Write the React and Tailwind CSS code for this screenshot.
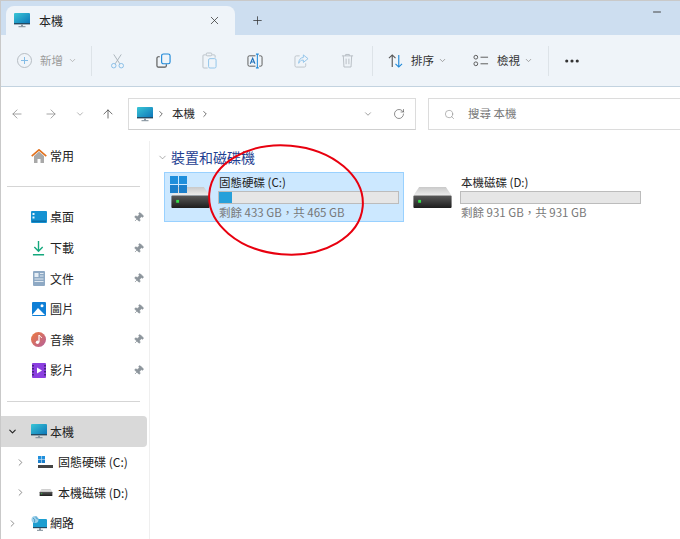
import React from 'react';
import { X, Plus, Minus, ChevronDown, ChevronRight, ArrowLeft, ArrowRight, ArrowUp, RotateCw, Search, MoreHorizontal, Pin } from 'lucide-react';

const font = { fontFamily: '"Noto Sans CJK TC", "Liberation Sans", sans-serif' };

const Monitor = ({ className }) => (
    <svg viewBox="0 0 16 15" className={className}>
        <defs>
            <linearGradient id="scr" x1="0" y1="0" x2="1" y2="1">
                <stop offset="0" stopColor="#39c6d6" />
                <stop offset="1" stopColor="#0c73b8" />
            </linearGradient>
        </defs>
        <rect x="0" y="0" width="16" height="11" rx="1" fill="url(#scr)" />
        <rect x="0" y="10" width="16" height="1.4" fill="#234a63" />
        <rect x="7" y="11.4" width="2" height="2" fill="#8a98a3" />
        <rect x="4.5" y="13.2" width="7" height="1" fill="#7c8a96" />
    </svg>
);

const WinLogo = ({ className }) => (
    <svg viewBox="0 0 17 17" className={className}>
        <rect x="0" y="0" width="8" height="8" fill="#1f8fdc" />
        <rect x="9" y="0" width="8" height="8" fill="#1f8fdc" />
        <rect x="0" y="9" width="8" height="8" fill="#1b7fcb" />
        <rect x="9" y="9" width="8" height="8" fill="#1b7fcb" />
    </svg>
);

const Drive = ({ className }) => (
    <svg viewBox="0 0 40 22" className={className}>
        <defs>
            <linearGradient id="drv" x1="0" y1="0" x2="0" y2="1">
                <stop offset="0" stopColor="#5a5a5a" />
                <stop offset="1" stopColor="#1d1d1d" />
            </linearGradient>
            <linearGradient id="top" x1="0" y1="0" x2="0" y2="1">
                <stop offset="0" stopColor="#c9c9c9" />
                <stop offset="1" stopColor="#eeeeee" />
            </linearGradient>
        </defs>
        <path d="M6 0 H34 L40 9 H0 Z" fill="url(#top)" />
        <rect x="0" y="9" width="40" height="13" rx="1" fill="url(#drv)" />
        <rect x="5" y="13.5" width="3" height="3" fill="#35e04a" />
    </svg>
);

const CutIcon = () => (
    <svg viewBox="0 0 16 16" className="w-[15px] h-[16px]" fill="none" strokeWidth="1">
        <path d="M4 1 L10.5 11 M12 1 L5.5 11" stroke="#a9b2ba" />
        <circle cx="4" cy="13" r="2.4" stroke="#84bce6" />
        <circle cx="12" cy="13" r="2.4" stroke="#84bce6" />
    </svg>
);

const CopyIcon = () => (
    <svg viewBox="0 0 16 16" className="w-[15px] h-[15px]" fill="none" strokeWidth="1.2">
        <path d="M4 4 H2.5 A1.5 1.5 0 0 0 1 5.5 V13.5 A1.5 1.5 0 0 0 2.5 15 H9.5 A1.5 1.5 0 0 0 11 13.5 V12" stroke="#555" />
        <rect x="6" y="1" width="9" height="10.5" rx="2" stroke="#1e88d8" />
    </svg>
);

const PasteIcon = () => (
    <svg viewBox="0 0 16 18" className="w-[15px] h-[17px]" fill="none" strokeWidth="1">
        <path d="M4 3 H2 A1 1 0 0 0 1 4 V16 A1 1 0 0 0 2 17 H6 M11 3 H13 A1 1 0 0 1 14 4 V6" stroke="#b9c0c6" />
        <rect x="4.5" y="1" width="6" height="3" rx="1" stroke="#b9c0c6" />
        <rect x="7" y="7" width="8" height="10" rx="1.5" stroke="#8fc3ea" />
    </svg>
);

const RenameIcon = () => (
    <svg viewBox="0 0 17 16" className="w-[16px] h-[16px]" fill="none">
        <path d="M9 2.5 H2.5 A1.5 1.5 0 0 0 1 4 V12 A1.5 1.5 0 0 0 2.5 13.5 H9 M13 2.5 H14.5 A1.5 1.5 0 0 1 16 4 V12 A1.5 1.5 0 0 1 14.5 13.5 H13" stroke="#555" strokeWidth="1" />
        <path d="M11 .7 V15.3 M9.5 .7 H12.5 M9.5 15.3 H12.5" stroke="#1e88d8" strokeWidth="1.1" />
        <path d="M3.5 11 L6 5 L8.5 11 M4.5 9 H7.5" stroke="#1e6fb8" strokeWidth="1.1" />
    </svg>
);

const ShareIcon = () => (
    <svg viewBox="0 0 16 15" className="w-[15px] h-[14px]" fill="none" strokeWidth="1">
        <path d="M6 2 H2.5 A1.5 1.5 0 0 0 1 3.5 V12.5 A1.5 1.5 0 0 0 2.5 14 H11 A1.5 1.5 0 0 0 12.5 12.5 V10" stroke="#bcc3c9" />
        <path d="M10 1 L15 5 L10 9 V6.5 C7.5 6.5 6 7.5 5 10 C5 6 7 4 10 3.7 Z" stroke="#8fc3ea" />
    </svg>
);

const TrashIcon = () => (
    <svg viewBox="0 0 14 16" className="w-[13px] h-[15px]" fill="none" stroke="#b5bcc2" strokeWidth="1">
        <path d="M1 3 H13 M5 3 V1.5 H9 V3 M2.5 3 L3.2 15 H10.8 L11.5 3 M5.5 6 V12 M8.5 6 V12" />
    </svg>
);

const SortIcon = () => (
    <svg viewBox="0 0 16 15" className="w-[15px] h-[14px]" fill="none" strokeWidth="1.2">
        <path d="M4.5 14 V1 M1 4.5 L4.5 1 L8 4.5" stroke="#555" />
        <path d="M11.5 1 V14 M8 10.5 L11.5 14 L15 10.5" stroke="#1e88d8" />
    </svg>
);

const ViewIcon = () => (
    <svg viewBox="0 0 17 13" className="w-[16px] h-[13px]" fill="none" stroke="#555" strokeWidth="1">
        <rect x="1" y="1" width="4" height="4" rx="2" />
        <rect x="1" y="8" width="4" height="4" rx="2" />
        <path d="M8 3 H16 M8 10 H16" />
    </svg>
);

const HomeIcon = () => (
    <svg viewBox="0 0 16 14" className="w-[16px] h-[14px]">
        <path d="M3 7 L8 2.5 L13 7 V14 H9.5 V10 H6.5 V14 H3 Z" fill="#a9a9a9" />
        <path d="M.7 7.2 L8 .8 L15.3 7.2" fill="none" stroke="#e2711d" strokeWidth="1.6" />
    </svg>
);

const DesktopIcon = () => (
    <svg viewBox="0 0 16 12" className="w-[16px] h-[12px]">
        <rect width="16" height="12" rx="1" fill="#1592d2" />
        <rect x="1" y="9.5" width="14" height="1.5" fill="#0b6ea8" />
        <rect x="1.5" y="2" width="2" height="2" fill="#e8f6fc" />
        <rect x="1.5" y="5.5" width="2" height="2" fill="#e8f6fc" />
    </svg>
);

const DownloadIcon = () => (
    <svg viewBox="0 0 14 16" className="w-[13px] h-[15px]" fill="none" stroke="#14a87d" strokeWidth="1.5">
        <path d="M7 0 V11 M2.5 6.5 L7 11 L11.5 6.5 M1 14.7 H13" />
    </svg>
);

const DocIcon = () => (
    <svg viewBox="0 0 12 15" className="w-[12px] h-[15px]">
        <rect width="12" height="15" rx="1" fill="#8ea9c4" />
        <rect x="1.5" y="2" width="4" height="4" fill="#e5edf4" />
        <path d="M7 2.5 H10.5 M7 5 H10.5 M1.5 8 H10.5 M1.5 10.5 H10.5" stroke="#dfe8f0" strokeWidth="1" />
    </svg>
);

const PicIcon = () => (
    <svg viewBox="0 0 14 14" className="w-[14px] h-[14px]">
        <rect width="14" height="14" rx="1" fill="#0f7fd6" />
        <circle cx="10" cy="3.8" r="1.5" fill="#fff" />
        <path d="M0 13 L6 6 L13 13 Z" fill="#fff" />
    </svg>
);

const MusicIcon = () => (
    <svg viewBox="0 0 15 15" className="w-[15px] h-[15px]">
        <defs>
            <linearGradient id="mus" x1="0" y1="0" x2="1" y2="1">
                <stop offset="0" stopColor="#ee7a3d" />
                <stop offset="1" stopColor="#b4609c" />
            </linearGradient>
        </defs>
        <circle cx="7.5" cy="7.5" r="7.5" fill="url(#mus)" />
        <path d="M8 3 V10" stroke="#fff" strokeWidth="1.2" />
        <path d="M8 3 C9 4.5 10.5 4.5 10.5 6" stroke="#fff" strokeWidth="1" fill="none" />
        <circle cx="6.5" cy="10.2" r="1.7" fill="#fff" />
    </svg>
);

const VideoIcon = () => (
    <svg viewBox="0 0 14 15" className="w-[14px] h-[15px]">
        <rect width="14" height="15" rx="1" fill="#8b3fe0" />
        <path d="M5 4.5 L10 7.5 L5 10.5 Z" fill="#fff" />
        <path d="M1 2 V13 M13 2 V13" stroke="#2d1a58" strokeWidth="1.4" strokeDasharray="1.5 1.5" />
    </svg>
);

const NetworkIcon = () => (
    <svg viewBox="0 0 16 15" className="w-[16px] h-[15px]">
        <rect x="2" y="3" width="14" height="9" rx="1" fill="#1d9ed0" />
        <rect x="2" y="11" width="14" height="1.2" fill="#234a63" />
        <rect x="8" y="12" width="2" height="2" fill="#8a98a3" />
        <rect x="6" y="13.8" width="6" height="1" fill="#7c8a96" />
        <circle cx="4" cy="3.6" r="3.5" fill="#9dd0ea" />
        <path d="M2 2 C3.5 3 4 4 3.5 6.5 M5 .5 C5 2.5 6 3 7.4 3" stroke="#2e8cbc" fill="none" strokeWidth=".8" />
    </svg>
);

const NavRow = ({ icon, label, pinned, chevron, active, indent }) => (
    <div className={`flex items-center h-[30.6px] ${active ? 'bg-[#d9d9d9] rounded-r-sm' : ''}`}>
        <div className={`w-[29px] flex shrink-0 ${indent ? 'pl-[14px]' : 'pl-[6px]'}`}>
            {chevron === 'open' && <ChevronDown size={11} strokeWidth={2.4} className="text-[#222]" />}
            {chevron === 'closed' && <ChevronRight size={11} strokeWidth={1.6} className="text-[#666]" />}
        </div>
        <div className={`flex justify-center items-center shrink-0 ${indent ? 'w-[17px] ml-[7px]' : 'w-[17px]'}`}>{icon}</div>
        <span className={`text-[12px] text-[#222] leading-none whitespace-nowrap ${indent ? 'ml-[4px]' : 'ml-[3px]'}`}>{label}</span>
        {pinned && <Pin size={11} fill="#8d959c" strokeWidth={1.5} className="ml-auto mr-[3px] text-[#8d959c] rotate-45" />}
    </div>
);

const Divider = () => (
    <div className="h-[30.6px] flex items-center pl-[6px] pr-[7px]">
        <div className="h-px w-full bg-[#d5d5d5]" />
    </div>
);

const ToolBtn = ({ children }) => (
    <div className="w-[46px] flex items-center justify-center">{children}</div>
);

const DriveCard = ({ selected, logo, name, used, info }) => (
    <div className={`w-[240px] h-[50px] flex border box-border ${selected ? 'bg-[#cce8ff] border-[#99d1ff]' : 'border-transparent'}`}>
        <div className="w-[54px] shrink-0 relative">
            {logo && <WinLogo className="absolute left-[5px] top-[3px] w-[17px] h-[17px] z-10" />}
            <Drive className="absolute left-[5px] top-[14px] w-[41px] h-[21px]" />
        </div>
        <div className="flex-1 pr-[4px] pt-[2px] min-w-0">
            <div className="text-[11.5px] leading-[14px] text-[#222] whitespace-nowrap">{name}</div>
            <div className="h-[13px] mt-[2px] -ml-[1px] bg-[#e6e6e6] border border-[#bcbcbc]">
                <div className="h-full bg-[#26a0da]" style={{ width: used }} />
            </div>
            <div className="text-[11.5px] leading-[14px] mt-[1px] text-[#777] whitespace-nowrap">{info}</div>
        </div>
    </div>
);

const App = () => {
    return (
        <div style={font} className="w-[680px] h-[539px] overflow-hidden relative bg-white border-l border-t border-[#c9c9c9] box-border flex flex-col">
            {/* Tabs */}
            <div className="h-[34px] shrink-0 bg-[#cddef0] flex items-end pl-[5px] relative">
                <div className="w-[229px] h-[29px] bg-[#eff4f9] rounded-t-lg flex items-center pl-[8px] pr-[14px]">
                    <Monitor className="w-[16px] h-[15px]" />
                    <span className="ml-[9px] text-[12px] text-[#222]">本機</span>
                    <X size={13} strokeWidth={1.4} className="ml-auto text-[#333]" />
                </div>
                <Plus size={13} strokeWidth={1.4} className="ml-[16px] mb-[8px] text-[#333]" />
                <Minus size={12} strokeWidth={2} className="absolute right-[17px] top-[5px] text-[#444]" />
            </div>

            {/* Toolbar */}
            <div className="h-[52px] shrink-0 bg-[#eff4f9] border-b border-[#c3d3e0] flex items-center pl-[16px]">
                <div className="flex items-center w-[59px]">
                    <svg viewBox="0 0 15 15" className="w-[15px] h-[15px] shrink-0" fill="none" strokeWidth="1">
                        <circle cx="7.5" cy="7.5" r="7" stroke="#b6bdc3" />
                        <path d="M7.5 4 V11 M4 7.5 H11" stroke="#84bce6" />
                    </svg>
                    <span className="ml-[8px] text-[11.5px] text-[#9b9b9b] whitespace-nowrap">新增</span>
                    <ChevronDown size={9} className="ml-[5px] shrink-0 text-[#aaa]" />
                </div>
                <div className="w-px h-[30px] bg-[#dde3e8] ml-[15px]" />
                <div className="flex ml-[2px]">
                    <ToolBtn><CutIcon /></ToolBtn>
                    <ToolBtn><CopyIcon /></ToolBtn>
                    <ToolBtn><PasteIcon /></ToolBtn>
                    <ToolBtn><RenameIcon /></ToolBtn>
                    <ToolBtn><ShareIcon /></ToolBtn>
                    <ToolBtn><TrashIcon /></ToolBtn>
                </div>
                <div className="w-px h-[30px] bg-[#dde3e8] ml-[2px]" />
                <div className="flex items-center ml-[15px] w-[62px]">
                    <SortIcon />
                    <span className="ml-[8px] text-[11.5px] text-[#333] whitespace-nowrap">排序</span>
                    <ChevronDown size={9} className="ml-[4px] text-[#888]" />
                </div>
                <div className="flex items-center ml-[23px]">
                    <ViewIcon />
                    <span className="ml-[8px] text-[11.5px] text-[#333] whitespace-nowrap">檢視</span>
                    <ChevronDown size={9} className="ml-[4px] text-[#888]" />
                </div>
                <div className="w-px h-[30px] bg-[#dde3e8] ml-[15px]" />
                <MoreHorizontal size={18} strokeWidth={2.2} className="ml-[14px] text-[#333]" />
            </div>

            {/* Address bar */}
            <div className="h-[54px] shrink-0 flex items-center pl-[9px]">
                <ArrowLeft size={14} strokeWidth={1.3} className="text-[#888]" />
                <ArrowRight size={14} strokeWidth={1.3} className="ml-[20px] text-[#888]" />
                <ChevronDown size={10} strokeWidth={1.5} className="ml-[17px] text-[#888]" />
                <ArrowUp size={14} strokeWidth={1.3} className="ml-[16px] text-[#444]" />
                <div className="ml-[13px] w-[288px] h-[32px] border border-[#dcdcdc] border-b-[#cfcfcf] flex items-center pl-[8px] pr-[10px]">
                    <Monitor className="w-[16px] h-[15px]" />
                    <ChevronRight size={10} strokeWidth={2} className="ml-[3px] text-[#555]" />
                    <span className="ml-[6px] text-[11.5px] text-[#222]">本機</span>
                    <ChevronRight size={10} strokeWidth={2} className="ml-[5px] text-[#555]" />
                    <ChevronDown size={10} strokeWidth={1.5} className="ml-auto text-[#666]" />
                    <RotateCw size={12} strokeWidth={1.3} className="ml-[20px] text-[#555]" />
                </div>
                <div className="ml-[12px] flex-1 h-[32px] border border-r-0 border-[#dcdcdc] flex items-center pl-[15px]">
                    <Search size={11} strokeWidth={1.3} className="text-[#888]" />
                    <span className="ml-[13px] text-[11.5px] text-[#777]">搜尋 本機</span>
                </div>
            </div>

            <div className="flex-1 flex min-h-0">
                {/* Sidebar */}
                <div className="w-[146px] shrink-0">
                    <NavRow icon={<HomeIcon />} label="常用" />
                    <Divider />
                    <NavRow icon={<DesktopIcon />} label="桌面" pinned />
                    <NavRow icon={<DownloadIcon />} label="下載" pinned />
                    <NavRow icon={<DocIcon />} label="文件" pinned />
                    <NavRow icon={<PicIcon />} label="圖片" pinned />
                    <NavRow icon={<MusicIcon />} label="音樂" pinned />
                    <NavRow icon={<VideoIcon />} label="影片" pinned />
                    <Divider />
                    <NavRow icon={<Monitor className="w-[16px] h-[15px]" />} label="本機" chevron="open" active />
                    <NavRow
                        indent
                        chevron="closed"
                        icon={
                            <span className="relative w-[15px] h-[12px] block">
                                <WinLogo className="absolute left-0 top-0 w-[7px] h-[7px]" />
                                <span className="absolute left-0 right-0 bottom-0 h-[3px] bg-[#444]" />
                            </span>
                        }
                        label="固態硬碟 (C:)"
                    />
                    <NavRow indent chevron="closed" icon={<Drive className="w-[14px] h-[7px]" />} label="本機磁碟 (D:)" />
                    <NavRow icon={<NetworkIcon />} label="網路" chevron="closed" />
                </div>
                <div className="w-px bg-[#efefef] ml-[2px]" />

                {/* Content */}
                <div className="flex-1 pl-[7px] pt-[8px]">
                    <div className="flex items-center h-[16px]">
                        <ChevronDown size={11} strokeWidth={1.3} className="text-[#777]" />
                        <span className="ml-[3px] text-[14px] leading-none text-[#1f3f92]">裝置和磁碟機</span>
                    </div>
                    <div className="flex gap-[2px] mt-[7px] ml-[7px]">
                        <DriveCard selected logo name="固態硬碟 (C:)" used="7%" info="剩餘 433 GB，共 465 GB" />
                        <DriveCard name="本機磁碟 (D:)" used="0%" info="剩餘 931 GB，共 931 GB" />
                    </div>
                </div>
            </div>

            {/* Red annotation circle */}
            <svg className="absolute left-[206px] top-[143px] w-[158px] h-[112px] pointer-events-none" viewBox="0 0 158 112" fill="none">
                <ellipse cx="79" cy="56" rx="77" ry="54.5" transform="rotate(5 79 56)" stroke="#e8000f" strokeWidth="2" />
            </svg>
        </div>
    );
};

export default App;
